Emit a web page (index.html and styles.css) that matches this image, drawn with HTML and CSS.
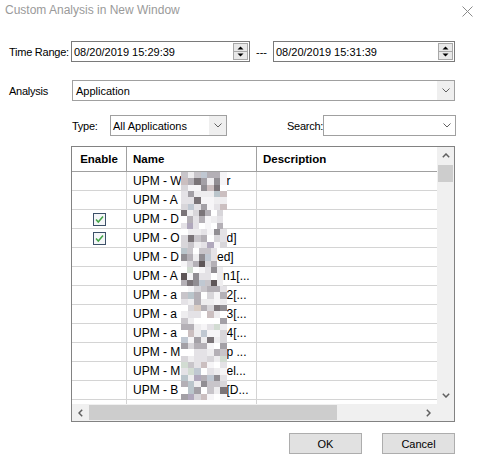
FILE: index.html
```html
<!DOCTYPE html>
<html>
<head>
<meta charset="utf-8">
<link rel="stylesheet" href="styles.css">
</head>
<body>
<div class="dialog">
  <div class="titlebar">
    <span class="title">Custom Analysis in New Window</span>
    <svg class="close" width="11" height="11" viewBox="0 0 11 11"><path d="M0.5 0.5 L10.5 10.5 M10.5 0.5 L0.5 10.5" stroke="#8a8a8a" stroke-width="1" fill="none"/></svg>
  </div>

  <div class="row row-time">
    <span class="lbl lbl-time">Time Range:</span>
    <div class="spin-input w1">
      <span class="val">08/20/2019 15:29:39</span>
      <svg class="spinner" width="15" height="17" viewBox="0 0 15 17"><rect x="0.5" y="0.5" width="14" height="16" fill="#e8e8e8" stroke="#a8a8a8"/><line x1="1" y1="8.5" x2="14" y2="8.5" stroke="#a8a8a8"/><path d="M4.5 6.5 L7.5 3.5 L10.5 6.5Z" fill="#000"/><path d="M4.5 10.5 L10.5 10.5 L7.5 13.5Z" fill="#000"/></svg>
    </div>
    <span class="dash">---</span>
    <div class="spin-input w2">
      <span class="val">08/20/2019 15:31:39</span>
      <svg class="spinner" width="15" height="17" viewBox="0 0 15 17"><rect x="0.5" y="0.5" width="14" height="16" fill="#e8e8e8" stroke="#a8a8a8"/><line x1="1" y1="8.5" x2="14" y2="8.5" stroke="#a8a8a8"/><path d="M4.5 6.5 L7.5 3.5 L10.5 6.5Z" fill="#000"/><path d="M4.5 10.5 L10.5 10.5 L7.5 13.5Z" fill="#000"/></svg>
    </div>
  </div>

  <div class="row row-analysis">
    <span class="lbl lbl-analysis">Analysis</span>
    <div class="combo combo-analysis">
      <span class="val">Application</span>
      <span class="drop shaded"><svg width="8" height="5" viewBox="0 0 8 5"><path d="M0.5 0.5 L4 4 L7.5 0.5" fill="none" stroke="#606060"/></svg></span>
    </div>
  </div>

  <div class="row row-filter">
    <span class="lbl lbl-type">Type:</span>
    <div class="combo combo-type">
      <span class="val">All Applications</span>
      <span class="drop shaded"><svg width="8" height="5" viewBox="0 0 8 5"><path d="M0.5 0.5 L4 4 L7.5 0.5" fill="none" stroke="#606060"/></svg></span>
    </div>
    <span class="lbl lbl-search">Search:</span>
    <div class="combo combo-search">
      <span class="val"></span>
      <span class="drop"><svg width="8" height="5" viewBox="0 0 8 5"><path d="M0.5 0.5 L4 4 L7.5 0.5" fill="none" stroke="#606060"/></svg></span>
    </div>
  </div>

  <div class="grid">
    <div class="table">
      <div class="thead">
        <div class="th c1 center">Enable</div>
        <div class="th c2">Name</div>
        <div class="th c3">Description</div>
      </div>
      <div class="tbody">
        <div class="tr"><div class="td c1"></div><div class="td c2"><span class="pre">UPM - W</span><span class="mosaic m7"></span><span class="suf">r</span></div><div class="td c3"></div></div>
        <div class="tr"><div class="td c1"></div><div class="td c2"><span class="pre">UPM - A</span><span class="mosaic m7"></span><span class="suf"></span></div><div class="td c3"></div></div>
        <div class="tr"><div class="td c1 center"><svg width="13" height="13" viewBox="0 0 13 13"><rect x="0.5" y="0.5" width="12" height="12" fill="#f4f6f8" stroke="#3c5068"/><path d="M3 6.5 L5.3 9 L10 3.5" fill="none" stroke="#43a547" stroke-width="1.5"/></svg></div><div class="td c2"><span class="pre">UPM - D</span><span class="mosaic m6"></span><span class="suf"></span></div><div class="td c3"></div></div>
        <div class="tr"><div class="td c1 center"><svg width="13" height="13" viewBox="0 0 13 13"><rect x="0.5" y="0.5" width="12" height="12" fill="#f4f6f8" stroke="#3c5068"/><path d="M3 6.5 L5.3 9 L10 3.5" fill="none" stroke="#43a547" stroke-width="1.5"/></svg></div><div class="td c2"><span class="pre">UPM - O</span><span class="mosaic m7"></span><span class="suf">d]</span></div><div class="td c3"></div></div>
        <div class="tr"><div class="td c1"></div><div class="td c2"><span class="pre">UPM - D</span><span class="mosaic m55"></span><span class="suf">ed]</span></div><div class="td c3"></div></div>
        <div class="tr"><div class="td c1"></div><div class="td c2"><span class="pre">UPM - A</span><span class="mosaic m6"></span><span class="suf">n1[...</span></div><div class="td c3"></div></div>
        <div class="tr"><div class="td c1"></div><div class="td c2"><span class="pre">UPM - a</span><span class="mosaic m7"></span><span class="suf">2[...</span></div><div class="td c3"></div></div>
        <div class="tr"><div class="td c1"></div><div class="td c2"><span class="pre">UPM - a</span><span class="mosaic m7"></span><span class="suf">3[...</span></div><div class="td c3"></div></div>
        <div class="tr"><div class="td c1"></div><div class="td c2"><span class="pre">UPM - a</span><span class="mosaic m7"></span><span class="suf">4[...</span></div><div class="td c3"></div></div>
        <div class="tr"><div class="td c1"></div><div class="td c2"><span class="pre">UPM - M</span><span class="mosaic m7"></span><span class="suf">p ...</span></div><div class="td c3"></div></div>
        <div class="tr"><div class="td c1"></div><div class="td c2"><span class="pre">UPM - M</span><span class="mosaic m7"></span><span class="suf">el...</span></div><div class="td c3"></div></div>
        <div class="tr"><div class="td c1"></div><div class="td c2"><span class="pre">UPM - B</span><span class="mosaic m7"></span><span class="suf">[D...</span></div><div class="td c3"></div></div>
        <div class="tr"><div class="td c1"></div><div class="td c2"></div><div class="td c3"></div></div>
      </div>
    </div>
    <div class="vscroll">
      <div class="sarrow"><svg width="8" height="5" viewBox="0 0 8 5"><path d="M0.8 4.2 L4 1 L7.2 4.2" fill="none" stroke="#606060" stroke-width="1.5"/></svg></div>
      <div class="vthumb"></div>
      <div class="strack"></div>
      <div class="sarrow"><svg width="8" height="5" viewBox="0 0 8 5"><path d="M0.8 0.8 L4 4 L7.2 0.8" fill="none" stroke="#606060" stroke-width="1.5"/></svg></div>
    </div>
    <div class="hscroll">
      <div class="sarrow"><svg width="5" height="8" viewBox="0 0 5 8"><path d="M4.2 0.8 L1 4 L4.2 7.2" fill="none" stroke="#606060" stroke-width="1.5"/></svg></div>
      <div class="hthumb"></div>
      <div class="strack"></div>
      <div class="sarrow"><svg width="5" height="8" viewBox="0 0 5 8"><path d="M0.8 0.8 L4 4 L0.8 7.2" fill="none" stroke="#606060" stroke-width="1.5"/></svg></div>
    </div>
    <div class="corner"></div>
  </div>

  <div class="buttons">
    <div class="btn">OK</div>
    <div class="btn">Cancel</div>
  </div>
</div>
<script src="script.js"></script>
</body>
</html>
```

FILE: styles.css
```css
html, body {
  margin: 0;
  padding: 0;
  background: #fff;
}
.dialog {
  width: 480px;
  height: 461px;
  background: #fff;
  font-family: "Liberation Sans", Arial, sans-serif;
  font-size: 11px;
  color: #000;
  overflow: hidden;
}
.titlebar {
  height: 22px;
  box-sizing: border-box;
  padding: 3px 7px 0 5px;
  display: flex;
  justify-content: space-between;
  align-items: flex-start;
}
.title {
  color: #9a9a9a;
  font-size: 12px;
  line-height: 15px;
}
.close {
  margin-top: 3px;
}
.row {
  display: flex;
  align-items: center;
  height: 21px;
}
.row-time {
  margin-top: 19px;
  padding-left: 9px;
}
.lbl {
  white-space: nowrap;
  letter-spacing: -0.25px;
}
.lbl-time {
  width: 62px;
}
.spin-input {
  box-sizing: border-box;
  height: 21px;
  border: 1px solid #7a7a7a;
  display: flex;
  align-items: center;
  justify-content: space-between;
  padding: 0 1px 0 2px;
  background: #fff;
}
.w1 { width: 179px; }
.w2 { width: 182px; }
.dash {
  width: 23px;
  text-align: center;
}
.row-analysis {
  margin-top: 18px;
  padding-left: 9px;
}
.lbl-analysis {
  width: 63px;
}
.combo {
  box-sizing: border-box;
  height: 21px;
  border: 1px solid #a0a0a0;
  display: flex;
  align-items: stretch;
  background: #fff;
}
.combo .val {
  flex: 1;
  display: flex;
  align-items: center;
  padding-left: 3px;
  white-space: nowrap;
}
.drop {
  width: 17px;
  display: flex;
  align-items: center;
  justify-content: center;
}
.drop.shaded {
  background: #efefef;
}
.combo-analysis { width: 383px; }
.row-filter {
  margin-top: 14px;
  padding-left: 72px;
}
.lbl-type { width: 38px; }
.combo-type { width: 117px; }
.combo-type .val { padding-left: 2px; }
.lbl-search {
  margin-left: 60px;
  width: 36px;
}
.combo-search { width: 133px; }

.grid {
  margin: 10px 0 0 71px;
  width: 384px;
  height: 276px;
  box-sizing: border-box;
  border: 1px solid #828282;
  display: grid;
  grid-template-columns: 1fr 17px;
  grid-template-rows: 1fr 17px;
  overflow: hidden;
}
.table {
  overflow: hidden;
}
.thead {
  display: grid;
  grid-template-columns: 55px 130px 1fr;
  height: 25px;
  box-sizing: border-box;
  border-bottom: 1px solid #a0a0a0;
}
.th {
  font-weight: bold;
  font-size: 11.5px;
  display: flex;
  align-items: center;
  padding-left: 6px;
  border-right: 1px solid #a0a0a0;
  box-sizing: border-box;
}
.th.c3 { border-right: none; }
.center {
  justify-content: center;
  padding-left: 0;
}
.tbody {
  font-size: 12px;
}
.tr {
  display: grid;
  grid-template-columns: 55px 130px 1fr;
  height: 19px;
  box-sizing: border-box;
  border-bottom: 1px solid #d4d4d4;
}
.td {
  box-sizing: border-box;
  border-right: 1px solid #d4d4d4;
  display: flex;
  align-items: center;
  white-space: nowrap;
}
.td.c3 { border-right: none; }
.td.c2 {
  padding-left: 6px;
  align-items: stretch;
}
.pre, .suf {
  display: flex;
  align-items: center;
}
.pre {
  width: 48px;
  overflow: hidden;
  flex: none;
}
.mosaic {
  flex: none;
  display: grid;
  grid-template-columns: repeat(auto-fill, 6.5px);
  grid-template-rows: repeat(3, 6.34px);
  height: 19px;
  margin-bottom: -1px;
  position: relative;
  z-index: 1;
}
.mosaic span { display: block; }
.m7 { width: 45.5px; }
.m6 { width: 42px; grid-template-columns: repeat(auto-fill, 6px); }
.m55 { width: 36px; grid-template-columns: repeat(auto-fill, 6px); }

.vscroll, .hscroll, .corner {
  background: #f0f0f0;
}
.vscroll {
  display: flex;
  flex-direction: column;
}
.hscroll {
  display: flex;
}
.sarrow {
  width: 17px;
  height: 17px;
  flex: none;
  display: flex;
  align-items: center;
  justify-content: center;
}
.strack { flex: 1; }
.vthumb {
  height: 17px;
  margin: 1px 1px 0 1px;
  background: #cdcdcd;
  flex: none;
}
.hthumb {
  width: 248px;
  margin: 1px 0;
  background: #cdcdcd;
  flex: none;
}
.buttons {
  display: flex;
  justify-content: flex-end;
  gap: 20px;
  margin-top: 11px;
  padding-right: 25px;
}
.btn {
  width: 73px;
  height: 21px;
  box-sizing: border-box;
  border: 1px solid #adadad;
  background: #e1e1e1;
  display: flex;
  align-items: center;
  justify-content: center;
}
```

FILE: script.js
```js
(function () {
  var seed = 12345;
  function rnd() {
    seed = (seed * 1103515245 + 12345) & 0x7fffffff;
    return seed / 0x7fffffff;
  }
  var pal = ['#ffffff', '#f6f5f7', '#eeedef', '#e4e2e6', '#d8d6da', '#c8c5ca', '#b4b0b6', '#a3a0a6', '#918e93', '#7a7478', '#5e5658', '#cbbfc0', '#bac5cb', '#d2dcd2', '#b0a8bc', '#dacdc4', '#c0c8d2'];
  var wt = [10, 8, 8, 7, 6, 5, 4, 3, 3, 2, 1, 2, 2, 1, 1, 1, 2];
  var total = wt.reduce(function (a, b) { return a + b; }, 0);
  function pick() {
    var v = rnd() * total;
    for (var i = 0; i < pal.length; i++) {
      v -= wt[i];
      if (v <= 0) return pal[i];
    }
    return pal[0];
  }
  var ms = document.querySelectorAll('.mosaic');
  ms.forEach(function (m) {
    var cols = m.classList.contains('m7') ? 7 : (m.classList.contains('m6') ? 7 : 6);
    for (var i = 0; i < cols * 3; i++) {
      var s = document.createElement('span');
      s.style.background = pick();
      m.appendChild(s);
    }
  });
})();
```
